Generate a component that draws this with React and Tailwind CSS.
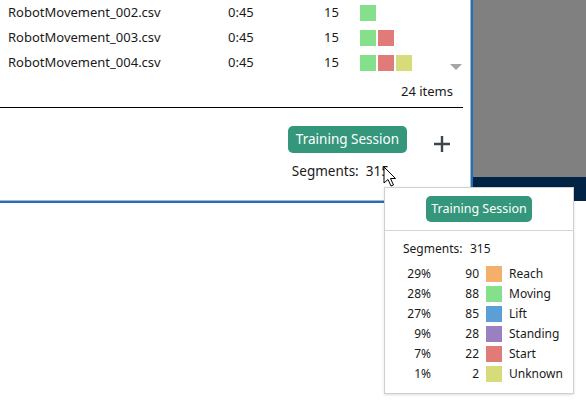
const files = [
  { name: 'RobotMovement_002.csv', time: '0:45', count: 15, tags: ['#84e08a'] },
  { name: 'RobotMovement_003.csv', time: '0:45', count: 15, tags: ['#84e08a', '#e07b78'] },
  { name: 'RobotMovement_004.csv', time: '0:45', count: 15, tags: ['#84e08a', '#e07b78', '#d6dc7a'] },
];

const segments = [
  { pct: '29%', n: 90, color: '#f4b06b', label: 'Reach' },
  { pct: '28%', n: 88, color: '#84e08a', label: 'Moving' },
  { pct: '27%', n: 85, color: '#5a9fd6', label: 'Lift' },
  { pct: '9%', n: 28, color: '#9b80c1', label: 'Standing' },
  { pct: '7%', n: 22, color: '#e07b78', label: 'Start' },
  { pct: '1%', n: 2, color: '#d6dc7a', label: 'Unknown' },
];

export default function App() {
  return (
    <div className="relative w-[586px] h-[409px] bg-white overflow-hidden text-[#1a1a1a] font-['Noto_Sans',sans-serif] text-[13px]">
      {/* Top window strip */}
      <div className="flex h-[203px]">
        <div className="w-[473px] border-r-2 border-b-2 border-[#1d6fc6]">
          <div className="h-full border-r border-b border-[#b4b4b4] flex flex-col">
            {/* File list */}
            <div className="flex h-[77px]">
              <div className="flex-1">
                {files.map((f) => (
                  <div key={f.name} className="flex items-center h-[25px]">
                    <span className="w-[228px] pl-[8px]">{f.name}</span>
                    <span className="w-[96px]">{f.time}</span>
                    <span className="w-[36px]">{f.count}</span>
                    <div className="flex gap-[2px]">
                      {f.tags.map((c, i) => (
                        <div key={i} className="w-[16px] h-[16px]" style={{ backgroundColor: c }} />
                      ))}
                    </div>
                  </div>
                ))}
              </div>
              <div className="w-[20px] flex flex-col justify-end pb-[7px] pr-[8px]">
                <svg width="12" height="6" viewBox="0 0 12 6">
                  <path d="M0 0H12L6 6Z" fill="#a6a6a6" />
                </svg>
              </div>
            </div>
            <div className="flex justify-end pr-[17px] h-[30px] items-center">24 items</div>
            <div className="w-[463px] h-px bg-black" />
            {/* Session summary */}
            <div className="flex justify-end pr-[20px] pt-[18px] gap-[27px]">
              <div className="flex flex-col items-start">
                <button className="h-[27px] px-[8px] rounded-[5px] bg-[#34967a] text-white text-[13.5px] leading-none">
                  Training Session
                </button>
                <div className="mt-[8px] pl-[4px] text-[13.5px]">Segments:&nbsp; 315</div>
              </div>
              <svg width="16" height="16" viewBox="0 0 16 16" className="mt-[10px]">
                <path d="M8 0V16M0 8H16" stroke="#3a4350" strokeWidth="2.4" />
              </svg>
            </div>
          </div>
        </div>
        <div className="flex-1 flex flex-col">
          <div className="h-[177px] bg-[#808080]" />
          <div className="h-[24px] bg-[#002346]" />
        </div>
      </div>

      {/* Tooltip */}
      <div className="absolute left-[384px] top-[187px] w-[190px] h-[207px] bg-white border border-[#cfcfcf] shadow-sm text-[12px]">
        <div className="h-[43px] flex items-center justify-center border-b border-[#d4d4d4]">
          <div className="h-[26px] px-[5px] rounded-[5px] bg-[#34967a] text-white text-[12.5px] flex items-center">
            Training Session
          </div>
        </div>
        <div className="flex items-center h-[20px] mt-[8px]">
          <span className="w-[85px] pl-[18px]">Segments:</span>
          <span>315</span>
        </div>
        <div className="mt-[5px]">
          {segments.map((s) => (
            <div key={s.label} className="flex items-center h-[20px]">
              <span className="w-[46px] text-right">{s.pct}</span>
              <span className="w-[48px] text-right">{s.n}</span>
              <div className="ml-[7px] w-[16px] h-[16px]" style={{ backgroundColor: s.color }} />
              <span className="ml-[7px]">{s.label}</span>
            </div>
          ))}
        </div>
      </div>

      {/* Mouse pointer */}
      <svg className="absolute left-[383px] top-[166px]" width="14" height="22" viewBox="0 0 14 22">
        <path d="M1 1V17L5 13.5L8 20L10.5 19L7.5 12.5H12.5Z" fill="white" stroke="black" strokeWidth="1" />
      </svg>
    </div>
  );
}
